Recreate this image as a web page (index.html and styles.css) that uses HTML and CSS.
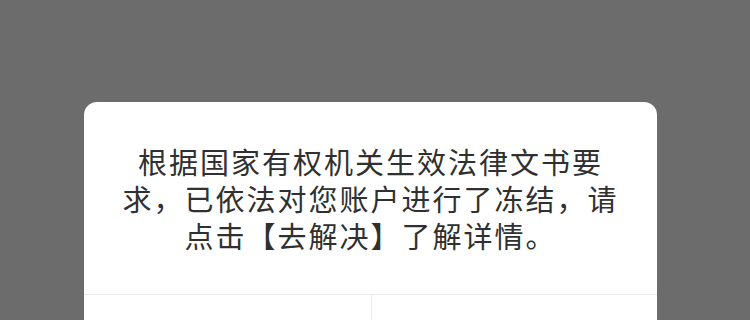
FILE: index.html
```html
<!DOCTYPE html>
<html lang="zh-CN">
<head>
<meta charset="utf-8">
<title>提示</title>
<link rel="stylesheet" href="styles.css">
</head>
<body>
<div class="dialog">
  <p class="message">根据国家有权机关生效法律文书要求，已依法对您账户进行了冻结，请点击【去解决】了解详情。</p>
  <div class="actions">
    <button class="btn" aria-label="取消"></button>
    <button class="btn primary" aria-label="去解决"></button>
  </div>
</div>
</body>
</html>
```

FILE: styles.css
```css
html, body {
  margin: 0;
  padding: 0;
  background: #6c6c6c;
  height: 100%;
  overflow: hidden;
}
body {
  font-family: "Noto Sans CJK SC", "Noto Sans", sans-serif;
}
.dialog {
  margin: 102px 0 0 84px;
  width: 573px;
  background: #ffffff;
  border-radius: 13px;
  overflow: hidden;
}
.message {
  margin: 0;
  padding: 41px 32px 40px;
  font-size: 29px;
  line-height: 37px;
  letter-spacing: 2px;
  color: #303030;
  text-align: center;
}
.actions {
  display: grid;
  grid-template-columns: 287px 1fr;
  border-top: 1px solid #ebebeb;
}
.btn {
  height: 110px;
  border: 0;
  padding: 0;
  background: #ffffff;
}
.btn.primary {
  border-left: 1px solid #ebebeb;
}
```
